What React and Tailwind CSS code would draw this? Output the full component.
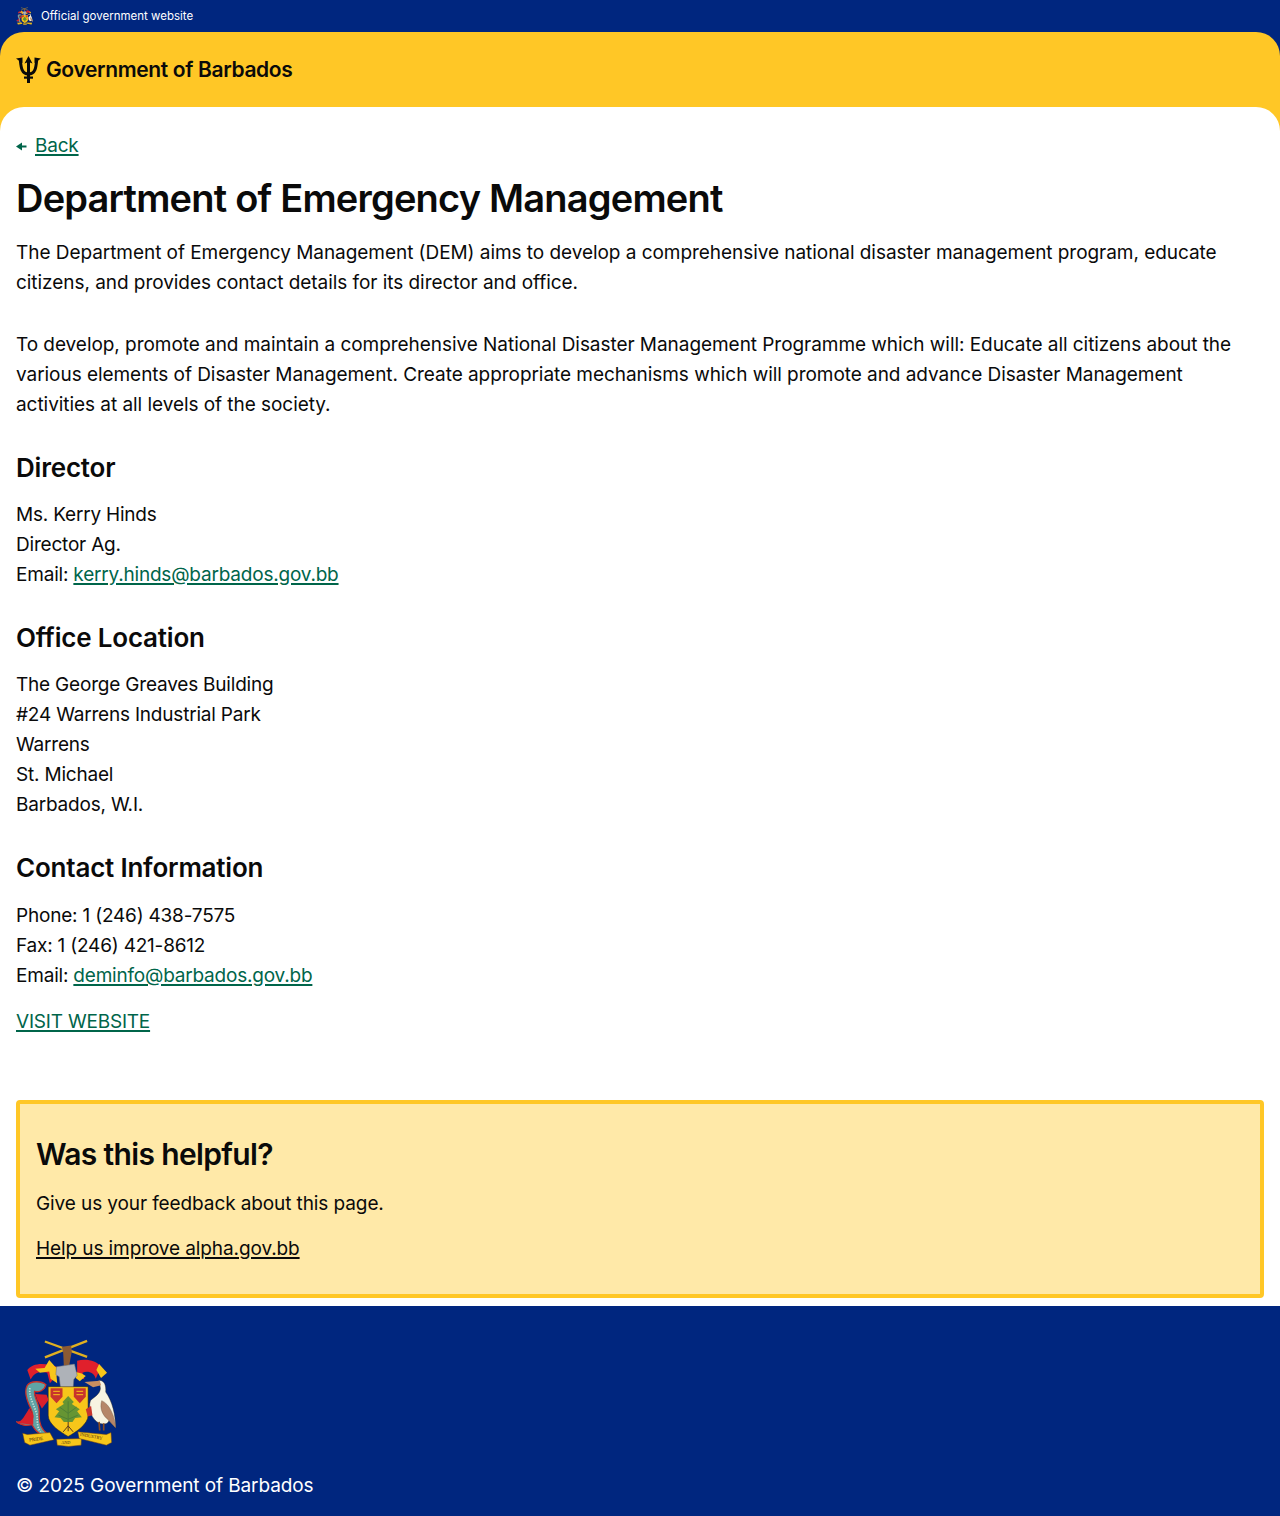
const font = "font-['Inter','Liberation_Sans',sans-serif]";

function Trident() {
  return (
    <svg width="25" height="27" viewBox="0 0 25 27" fill="#0a0a0a" className="shrink-0">
      {/* centre prong and shaft */}
      <path d="M12.500 0 L16.500 7.500 L14 6.500 V27 H11 V6.500 L8.500 7.500 Z" />
      {/* side prongs */}
      <path d="M4.300 4 C5 11 5.500 18 12.500 18 C19.500 18 20 11 20.700 4" fill="none" stroke="#0a0a0a" strokeWidth="3" />
      <path d="M0 2.500 L6.500 1.500 L6.500 7 L3.400 5 Z" />
      <path d="M25 2.500 L18.500 1.500 L18.500 7 L21.600 5 Z" />
      <path d="M8 20.500 H17 V22.700 H8 Z" />
    </svg>
  );
}

function Crest({ className }) {
  return (
    <svg viewBox="48 36 304 330" className={className}>
      {/* crossed sugar cane */}
      <path d="M135 46 L262 92" stroke="#e0b020" strokeWidth="7" />
      <path d="M262 44 L135 94" stroke="#e0b020" strokeWidth="7" />
      {/* arm and hand */}
      <path d="M186 62 L214 58 L216 76 L208 118 L192 120 L190 80 Z" fill="#8a5a34" />
      {/* mantling */}
      <path d="M82 132 C96 112 130 108 170 122 L176 142 L150 172 L142 140 C120 134 104 138 92 160 Z" fill="#e0202c" />
      <path d="M106 128 L134 126 L148 102 L166 122 L180 128 L170 150 L172 172 L152 158 L148 136 L120 140 Z" fill="#f7c61a" />
      <path d="M232 104 C256 96 290 102 304 122 L288 158 C284 140 264 132 248 140 L254 160 L232 150 Z" fill="#e0202c" />
      <path d="M298 114 L322 140 L304 156 L290 132 Z" fill="#f7c61a" />
      <path d="M228 138 L246 142 L258 150 L240 166 L228 156 Z" fill="#f7c61a" />
      {/* helmet */}
      <path d="M170 122 L224 114 L232 148 L222 160 L220 186 L182 186 L178 152 L168 146 Z" fill="#aeb2b8" stroke="#6b6e73" strokeWidth="1.500" />
      {/* shield */}
      <path d="M145 182 H265 V268 C265 296 228 318 205 332 C182 318 145 296 145 268 Z" fill="#f7c61a" stroke="#2c2210" strokeWidth="1.500" />
      <path d="M152 187 H188 V212 L170 232 L152 212 Z" fill="#c8352c" />
      <path d="M222 187 H258 V212 L240 232 L222 212 Z" fill="#c8352c" />
      <path d="M160 196 H180 M160 206 H180 M230 196 H250 M230 206 H250" stroke="#f7c61a" strokeWidth="3" />
      {/* tree */}
      <path d="M205 226 V316 M205 300 L190 318 M205 300 L220 318 M205 262 L180 244 M205 262 L230 244 M205 280 L176 268 M205 280 L234 268" stroke="#5c3a1c" strokeWidth="3" fill="none" />
      <path d="M205 210 L222 228 L216 234 L240 250 L232 256 L246 274 L226 276 L218 288 L192 288 L182 276 L164 274 L178 256 L168 250 L192 234 L188 228 Z" fill="#4c8c38" fillOpacity="0.850" />
      {/* dolphin */}
      <path d="M138 176 C124 164 92 164 82 178 C72 196 80 222 92 246 C104 272 98 286 88 278 C76 276 64 292 50 288 C60 298 80 300 96 296 C102 308 112 322 128 326 L140 322 C120 306 116 282 118 258 C118 228 100 214 104 196 C116 200 134 194 138 176 Z" fill="#5fa3a6" stroke="#c8322a" strokeWidth="4" />
      <path d="M106 204 L140 206 L146 222 L126 248 L112 222 Z" fill="#d8202c" />
      <path d="M88 246 L100 268 L100 296 L52 292 C66 284 76 268 88 246 Z" fill="#d8202c" />
      <path d="M90 186 C86 210 100 232 110 262 C114 280 108 300 122 318" stroke="#cfe0d8" strokeWidth="5" strokeDasharray="4 4" fill="none" />
      {/* pelican */}
      <path d="M296 164 C312 160 320 176 318 198 C338 226 348 268 348 306 L328 284 C324 296 312 296 298 292 C276 280 264 250 272 224 C284 212 300 206 302 188 C302 178 298 172 296 164 Z" fill="#f8f4e2" stroke="#26221a" strokeWidth="1.200" />
      <path d="M306 224 C330 234 346 272 348 306 L326 282 C310 270 298 248 306 224 Z" fill="#b58668" stroke="#5e4230" strokeWidth="1" />
      <path d="M254 168 L300 164 L304 178 L280 184 Z" fill="#c98e60" />
      <path d="M298 288 L300 314 M312 292 L312 314" stroke="#8a4a20" strokeWidth="5" />
      <path d="M258 250 L274 240 L278 268 L264 272 Z" fill="#c8352c" />
      {/* motto scroll */}
      <path d="M68 322 L82 326 L150 320 L162 342 L90 358 L74 350 Z" fill="#f7c61a" stroke="#6a3a14" strokeWidth="1.500" />
      <path d="M170 340 L245 338 L244 358 L206 362 L172 358 Z" fill="#f7c61a" stroke="#6a3a14" strokeWidth="1.500" />
      <path d="M234 318 L320 326 L334 320 L336 350 L320 358 L238 338 Z" fill="#f7c61a" stroke="#6a3a14" strokeWidth="1.500" />
      <text x="88" y="347" fontSize="15" fill="#4a2a10" fontFamily="Liberation Serif, serif" transform="rotate(-6 88 347)">PRIDE</text>
      <text x="184" y="354" fontSize="13" fill="#4a2a10" fontFamily="Liberation Serif, serif">AND</text>
      <text x="240" y="330" fontSize="14" fill="#4a2a10" fontFamily="Liberation Serif, serif" transform="rotate(10 240 330)">INDUSTRY</text>
    </svg>
  );
}

function GreenLink({ children }) {
  return <a href="#" className="text-[#00654a] underline decoration-2 underline-offset-2">{children}</a>;
}

export default function App() {
  return (
    <div className={`${font} bg-[#00267f] text-[19px] leading-[30px] tracking-[-0.2px] text-[#0a0a0a]`}>
      <div className="flex h-8 items-center gap-2 px-4 text-[11.5px] leading-4 tracking-[0px] text-white">
        <Crest className="h-[18px] w-[17px]" />
        <span>Official government website</span>
      </div>

      <div className="rounded-t-3xl bg-[#ffc726]">
        <div className="flex h-[75px] items-center gap-[5px] px-4">
          <Trident />
          <span className="text-[21px] font-semibold leading-7 tracking-[-0.36px]">Government of Barbados</span>
        </div>

        <main className="h-[1199px] rounded-t-3xl bg-white px-4 pt-6">
          <div className="flex items-center gap-2">
            <svg width="11" height="9" viewBox="0 0 11 9" fill="#00654a"><path d="M0 4.500 L6 0.500 V3.500 H10.500 V5.500 H6 V8.500 Z" /></svg>
            <GreenLink>Back</GreenLink>
          </div>

          <h1 className="mt-3 text-[38px] font-semibold leading-[50px] tracking-[-0.8px]">Department of Emergency Management</h1>
          <p className="mt-[15px] tracking-[-0.05px]">The Department of Emergency Management (DEM) aims to develop a comprehensive national disaster management program, educate citizens, and provides contact details for its director and office.</p>
          <p className="mt-8 tracking-[-0.05px]">To develop, promote and maintain a comprehensive National Disaster Management Programme which will: Educate all citizens about the various elements of Disaster Management. Create appropriate mechanisms which will promote and advance Disaster Management activities at all levels of the society.</p>

          <h2 className="mt-[30px] text-[26px] font-semibold leading-[36px]">Director</h2>
          <p className="mt-3.5">Ms. Kerry Hinds<br />Director Ag.<br />Email: <GreenLink>kerry.hinds@barbados.gov.bb</GreenLink></p>

          <h2 className="mt-[30px] text-[26px] font-semibold leading-[36px]">Office Location</h2>
          <p className="mt-3.5">The George Greaves Building<br />#24 Warrens Industrial Park<br />Warrens<br />St. Michael<br />Barbados, W.I.</p>

          <h2 className="mt-[30px] text-[26px] font-semibold leading-[36px]">Contact Information</h2>
          <p className="mt-[15px]">Phone: 1 (246) 438-7575<br />Fax: 1 (246) 421-8612<br />Email: <GreenLink>deminfo@barbados.gov.bb</GreenLink></p>
          <p className="mt-4"><GreenLink>VISIT WEBSITE</GreenLink></p>

          <section className="mt-[63px] h-[198px] rounded border-4 border-[#ffc726] bg-[#ffe9a8] px-4 pt-[30px]">
            <h2 className="text-[30px] font-semibold leading-[40px] tracking-[-0.65px]">Was this helpful?</h2>
            <p className="mt-[15px] tracking-[-0.1px]">Give us your feedback about this page.</p>
            <p className="mt-[15px] tracking-[-0.1px]"><a href="#" className="underline decoration-2 underline-offset-2">Help us improve alpha.gov.bb</a></p>
          </section>
        </main>
      </div>

      <footer className="h-[210px] bg-[#00267f] px-4 pt-8 text-white">
        <Crest className="h-[110px] w-[101px]" />
        <p className="mt-[23px] tracking-[-0.1px]">© 2025 Government of Barbados</p>
      </footer>
    </div>
  );
}
